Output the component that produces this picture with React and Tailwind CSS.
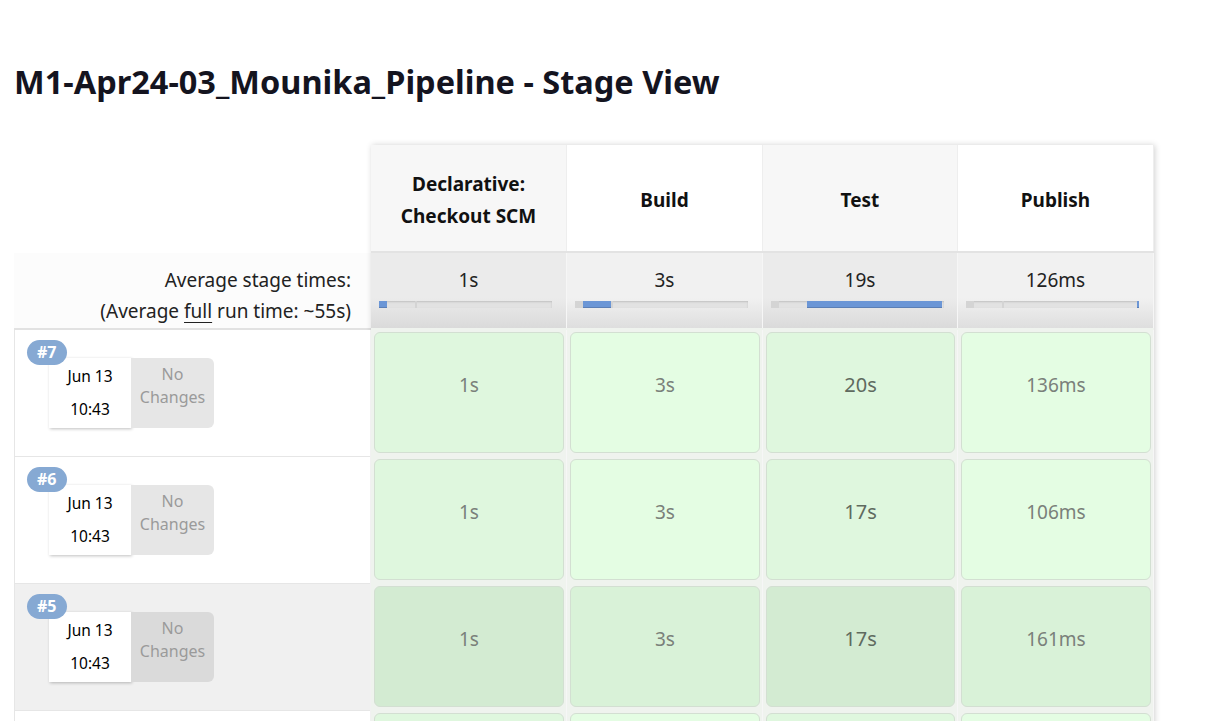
import React from 'react';

const stages = [
  { name: ['Declarative:', 'Checkout SCM'], avg: '1s', barStart: 0, barWidth: 8 },
  { name: ['Build'], avg: '3s', barStart: 8, barWidth: 28 },
  { name: ['Test'], avg: '19s', barStart: 36, barWidth: 135 },
  { name: ['Publish'], avg: '126ms', barStart: 171, barWidth: 2 },
];

const runs = [
  { id: '#7', date: 'Jun 13', time: '10:43', times: ['1s', '3s', '20s', '136ms'], hover: false },
  { id: '#6', date: 'Jun 13', time: '10:43', times: ['1s', '3s', '17s', '106ms'], hover: false },
  { id: '#5', date: 'Jun 13', time: '10:43', times: ['1s', '3s', '17s', '161ms'], hover: true },
  { id: '#4', date: 'Jun 13', time: '10:43', times: ['1s', '3s', '18s', '120ms'], hover: false },
];

const colWidths = ['w-[196px]', 'w-[196px]', 'w-[195px]', 'w-[196px]'];

function RunCell({ run }) {
  return (
    <div
      className={
        'relative h-[127px] w-[356px] border-b border-l border-[#e6e6e6] ' +
        (run.hover ? 'bg-[#f0f0f0]' : 'bg-white')
      }
    >
      <span className="absolute left-[12px] top-[10px] z-10 rounded-full bg-[#86a9d3] px-[10px] text-[16px] font-bold leading-[25px] text-white">
        {run.id}
      </span>
      <div className="absolute left-[34px] top-[28px] flex">
        <div className="flex h-[70px] w-[82px] flex-col items-center gap-[13px] bg-white pt-[8px] text-[15.5px] leading-[20px] text-black shadow-[1px_1px_3px_rgba(0,0,0,0.25)]">
          <span>{run.date}</span>
          <span>{run.time}</span>
        </div>
        <div
          className={
            'flex h-[70px] w-[83px] flex-col items-center rounded-r-[6px] pt-[5px] text-[16px] leading-[23px] text-[#9a9a9a] ' +
            (run.hover ? 'bg-[#dadada]' : 'bg-[#e6e6e6]')
          }
        >
          <span>No</span>
          <span>Changes</span>
        </div>
      </div>
    </div>
  );
}

function StageCell({ value, col, hover, width }) {
  const odd = col % 2 === 0;
  let bg;
  if (hover) bg = odd ? 'bg-[#d3ebd2]' : 'bg-[#d9f2d8]';
  else bg = odd ? 'bg-[#dff7de]' : 'bg-[#e4fde3]';
  const strong = col === 2;
  return (
    <div className={'h-[127px] border-r border-[#f6f6f6] pb-[4px] pl-[3px] pr-[2px] pt-[2px] ' + width}>
      <div
        className={
          'flex h-full justify-center rounded-[6px] border border-[#d3dfd2] pt-[38px] leading-[28px] ' +
          bg +
          (strong ? ' text-[20px] text-[#5f6a5f]' : ' text-[19px] text-[#7a807a]')
        }
      >
        {value}
      </div>
    </div>
  );
}

export default function App() {
  return (
    <div className="min-h-screen bg-white font-['Noto_Sans','Open_Sans',sans-serif] text-[#1a1a1a]">
      <h1 className="pl-[14px] pt-[60px] text-[32.5px] font-bold leading-[44px] text-[#14141f]">
        M1-Apr24-03_Mounika_Pipeline - Stage View
      </h1>

      <div className="mt-[41px] flex pl-[14px]">
        {/* left column */}
        <div className="flex w-[357px] flex-col">
          <div className="h-[108px]" />
          <div className="flex h-[77px] flex-col items-end justify-center border-b-2 border-[#e2e2e2] bg-[#fcfcfc] pr-[20px] pt-[10px] text-[19px] leading-[31px] text-[#222]">
            <span>Average stage times:</span>
            <span>
              (Average <span className="underline underline-offset-4">full</span> run time: ~55s)
            </span>
          </div>
          {runs.map((run) => (
            <RunCell key={run.id} run={run} />
          ))}
        </div>

        {/* stage columns */}
        <div className="flex flex-col bg-[#eff3ee] shadow-[1px_0_6px_rgba(0,0,0,0.18)]">
          <div className="flex h-[108px] border-b-2 border-[#e3e3e3]">
            {stages.map((s, i) => (
              <div
                key={i}
                className={
                  'flex flex-col items-center justify-center border-r border-[#eeeeee] pt-[4px] text-[19px] font-bold leading-[32px] text-[#111] ' +
                  colWidths[i] +
                  (i % 2 === 0 ? ' bg-[#f7f7f7]' : ' bg-white')
                }
              >
                {s.name.map((line) => (
                  <span key={line}>{line}</span>
                ))}
              </div>
            ))}
          </div>
          <div className="flex h-[77px] border-b-2 border-[#eff3ee]">
            {stages.map((s, i) => (
              <div
                key={i}
                className={
                  'relative border-r border-[#f6f6f6] ' +
                  colWidths[i] +
                  (i % 2 === 0
                    ? ' bg-[linear-gradient(to_bottom,#ebebeb_0%,#ebebeb_60%,#dadada_100%)]'
                    : ' bg-[linear-gradient(to_bottom,#f1f1f1_0%,#f1f1f1_60%,#dedede_100%)]')
                }
              >
                <div className="pt-[14px] text-center text-[19px] leading-[26px] text-[#222]">{s.avg}</div>
                <div className="relative ml-[8px] mt-[8px] h-[7px] w-[173px] bg-[#e2e2e2] shadow-[inset_0_1px_2px_rgba(0,0,0,0.15)]">
                  <div className="absolute left-0 top-0 h-full w-[8px] bg-[#d4d4d4]" />
                  <div className="absolute left-[36px] top-0 h-full w-[2px] bg-[#d4d4d4]" />
                  <div
                    className="absolute top-0 h-full bg-[#6b96d6] shadow-[inset_0_-1px_0_rgba(0,0,0,0.15)]"
                    style={{ left: s.barStart, width: s.barWidth }}
                  />
                </div>
              </div>
            ))}
          </div>
          {runs.map((run) => (
            <div key={run.id} className="flex">
              {run.times.map((t, i) => (
                <StageCell key={i} value={t} col={i} hover={run.hover} width={colWidths[i]} />
              ))}
            </div>
          ))}
        </div>
      </div>
    </div>
  );
}
